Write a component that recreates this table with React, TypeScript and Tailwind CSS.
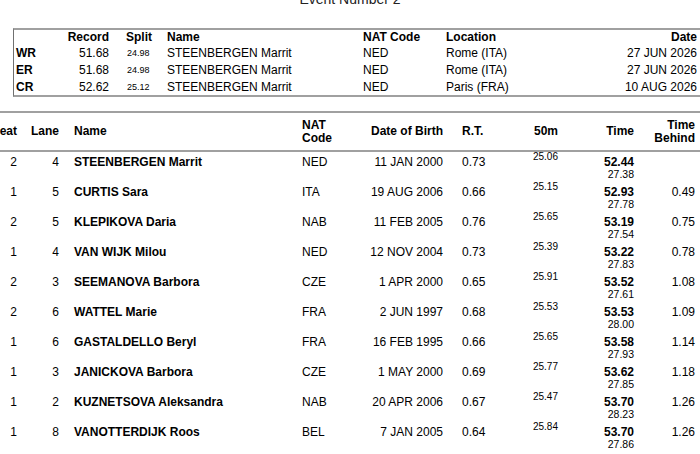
import React from "react";

type Row = {
  heat: string;
  lane: string;
  name: string;
  nat: string;
  dob: string;
  rt: string;
  split: string;
  time: string;
  sub: string;
  behind: string;
};

const rows: Row[] = [
  { heat: "2", lane: "4", name: "STEENBERGEN Marrit", nat: "NED", dob: "11 JAN 2000", rt: "0.73", split: "25.06", time: "52.44", sub: "27.38", behind: "" },
  { heat: "1", lane: "5", name: "CURTIS Sara", nat: "ITA", dob: "19 AUG 2006", rt: "0.66", split: "25.15", time: "52.93", sub: "27.78", behind: "0.49" },
  { heat: "2", lane: "5", name: "KLEPIKOVA Daria", nat: "NAB", dob: "11 FEB 2005", rt: "0.76", split: "25.65", time: "53.19", sub: "27.54", behind: "0.75" },
  { heat: "1", lane: "4", name: "VAN WIJK Milou", nat: "NED", dob: "12 NOV 2004", rt: "0.73", split: "25.39", time: "53.22", sub: "27.83", behind: "0.78" },
  { heat: "2", lane: "3", name: "SEEMANOVA Barbora", nat: "CZE", dob: "1 APR 2000", rt: "0.65", split: "25.91", time: "53.52", sub: "27.61", behind: "1.08" },
  { heat: "2", lane: "6", name: "WATTEL Marie", nat: "FRA", dob: "2 JUN 1997", rt: "0.68", split: "25.53", time: "53.53", sub: "28.00", behind: "1.09" },
  { heat: "1", lane: "6", name: "GASTALDELLO Beryl", nat: "FRA", dob: "16 FEB 1995", rt: "0.66", split: "25.65", time: "53.58", sub: "27.93", behind: "1.14" },
  { heat: "1", lane: "3", name: "JANICKOVA Barbora", nat: "CZE", dob: "1 MAY 2000", rt: "0.69", split: "25.77", time: "53.62", sub: "27.85", behind: "1.18" },
  { heat: "1", lane: "2", name: "KUZNETSOVA Aleksandra", nat: "NAB", dob: "20 APR 2006", rt: "0.67", split: "25.47", time: "53.70", sub: "28.23", behind: "1.26" },
  { heat: "1", lane: "8", name: "VANOTTERDIJK Roos", nat: "BEL", dob: "7 JAN 2005", rt: "0.64", split: "25.84", time: "53.70", sub: "27.86", behind: "1.26" },
];

const records = [
  { code: "WR", rec: "51.68", split: "24.98", name: "STEENBERGEN Marrit", nat: "NED", loc: "Rome (ITA)", date: "27 JUN 2026" },
  { code: "ER", rec: "51.68", split: "24.98", name: "STEENBERGEN Marrit", nat: "NED", loc: "Rome (ITA)", date: "27 JUN 2026" },
  { code: "CR", rec: "52.62", split: "25.12", name: "STEENBERGEN Marrit", nat: "NED", loc: "Paris (FRA)", date: "10 AUG 2026" },
];

export default function App() {
  return (
    <div
      className="w-[700px] h-[454px] overflow-hidden bg-white text-black text-[12px] whitespace-nowrap"
      style={{ fontFamily: '"Liberation Sans", Arial, sans-serif' }}
    >
      {/* Title */}
      <div className="-mt-[9px] h-[16px] leading-[16px] text-[14px] text-center text-[#222]">
        Event Number 2
      </div>

      {/* Records table */}
      <div className="mt-[21px] ml-[13px] border-l border-y-2 border-l-[#707070] border-y-[#a0a0a0]">
        <div className="flex h-[14px] items-center font-bold leading-[14px]">
          <div className="w-[46px]" />
          <div className="w-[49px] text-right">Record</div>
          <div className="w-[58px] pl-[17px]">Split</div>
          <div className="w-[196px]">Name</div>
          <div className="w-[83px]">NAT Code</div>
          <div className="flex-1 flex">
            <div>Location</div>
          </div>
          <div className="pr-[3px] text-right">Date</div>
        </div>
        {records.map((r) => (
          <div key={r.code} className="flex h-[17px] items-center leading-[14px]">
            <div className="w-[46px] pl-[2px] font-bold">{r.code}</div>
            <div className="w-[49px] text-right">{r.rec}</div>
            <div className="w-[58px] pl-[18px] text-[9px]">{r.split}</div>
            <div className="w-[196px]">{r.name}</div>
            <div className="w-[83px]">{r.nat}</div>
            <div className="flex-1">{r.loc}</div>
            <div className="pr-[3px] text-right">{r.date}</div>
          </div>
        ))}
      </div>

      {/* Results table */}
      <div className="mt-[14px] border-y-2 border-[#a0a0a0]">
        <div className="flex h-[37px] items-center font-bold leading-[13px]">
          <div className="w-[17px] flex justify-end">Heat</div>
          <div className="w-[42px] text-right">Lane</div>
          <div className="w-[243px] pl-[15px]">Name</div>
          <div className="w-[58px]">
            NAT
            <br />
            Code
          </div>
          <div className="w-[83px] text-right">Date of Birth</div>
          <div className="w-[57px] pl-[19px]">R.T.</div>
          <div className="w-[58px] text-right">50m</div>
          <div className="w-[76px] text-right">Time</div>
          <div className="w-[61px] text-right">
            Time
            <br />
            Behind
          </div>
        </div>
      </div>
      <div className="flex flex-col">
        {rows.map((r, i) => (
          <div key={i} className="flex h-[30px] items-start">
            <div className="w-[17px] pt-[3px] leading-[14px] text-right">{r.heat}</div>
            <div className="w-[42px] pt-[3px] leading-[14px] text-right">{r.lane}</div>
            <div className="w-[243px] pt-[3px] pl-[15px] leading-[14px] font-bold">{r.name}</div>
            <div className="w-[58px] pt-[3px] leading-[14px]">{r.nat}</div>
            <div className="w-[83px] pt-[3px] leading-[14px] text-right">{r.dob}</div>
            <div className="w-[57px] pt-[3px] pl-[19px] leading-[14px]">{r.rt}</div>
            <div className="w-[58px] leading-[10px] text-[10px] text-right">{r.split}</div>
            <div className="w-[76px] pt-[3px] flex flex-col items-end">
              <div className="leading-[14px] font-bold">{r.time}</div>
              <div className="-mt-[1px] leading-[12px] text-[10.5px]">{r.sub}</div>
            </div>
            <div className="w-[61px] pt-[3px] leading-[14px] text-right">{r.behind}</div>
          </div>
        ))}
      </div>
    </div>
  );
}
